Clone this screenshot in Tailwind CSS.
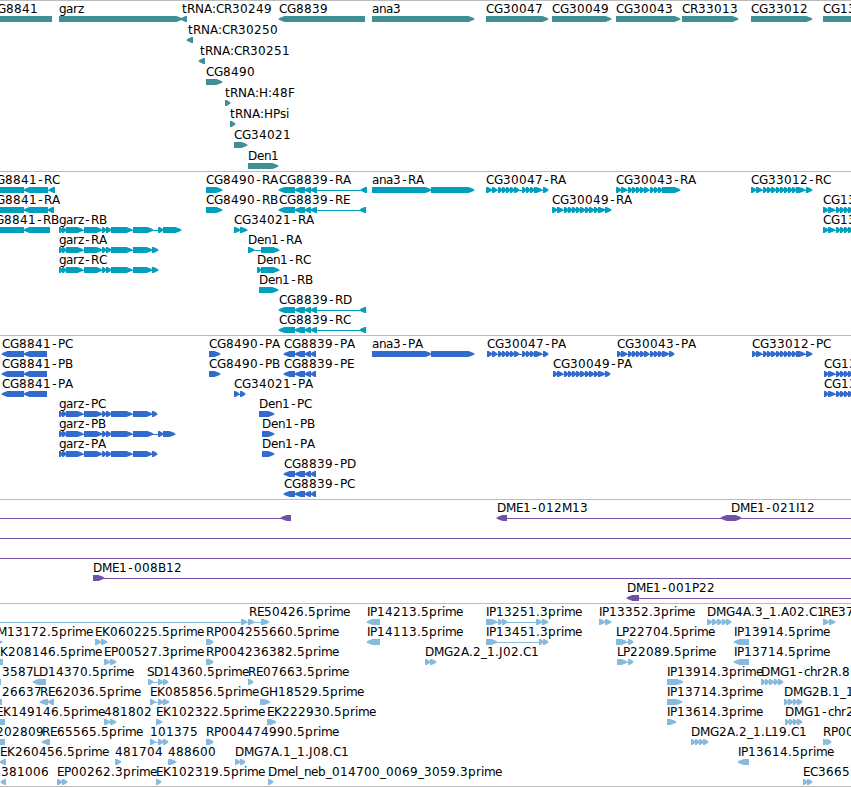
<!DOCTYPE html>
<html lang="en">
<head>
    <meta charset="UTF-8">
    <meta name="viewport" content="width=device-width, initial-scale=1.0">
    <title>Genome Browser</title>
    <script src="https://cdn.jsdelivr.net/npm/@tailwindcss/browser@4"></script>
</head>
<body class="bg-white overflow-hidden">

    <!-- Tracks, stacked top to bottom -->
    <main class="flex flex-col w-[851px] h-[787px] overflow-hidden border-b border-[#bbbbbb]">
        <section class="h-[171px] shrink-0 border-t border-[#bbbbbb] text-[#3f8f95]">
            <svg id="genes" class="block w-full h-full"></svg>
        </section>
        <section class="h-[164px] shrink-0 border-t border-[#bbbbbb] text-[#009fc0]">
            <svg id="transcripts" class="block w-full h-full"></svg>
        </section>
        <section class="h-[164px] shrink-0 border-t border-[#bbbbbb] text-[#316bce]">
            <svg id="proteins" class="block w-full h-full"></svg>
        </section>
        <section class="h-[104px] shrink-0 border-t border-[#bbbbbb] text-[#7350a8]">
            <svg id="clones" class="block w-full h-full"></svg>
        </section>
        <section class="h-[183px] shrink-0 border-t border-[#bbbbbb] text-[#87bbdd]">
            <svg id="ests" class="block w-full h-full"></svg>
        </section>
    </main>

    <script>
        // Label letter widths in pixels, digits are 8
        const widths = {
            C: 8, G: 9, R: 8, A: 8, B: 8, P: 7, N: 9, H: 9, F: 7, D: 9, E: 7, K: 8, S: 7, L: 6, M: 10, I: 3, J: 4,
            a: 7, b: 8, c: 6, e: 7, g: 7, h: 7, i: 3, l: 3, m: 11, n: 7, p: 8, r: 5, s: 6, t: 5, z: 6,
            "-": 7, ":": 4, ".": 4, "_": 6
        };

        const garz = "59-62 62-66 66-83 84-102 102-106 106-111 111-132";
        const cg8839 = "279-295 295-305 305-311 311-317";
        const cg8839p = "284-295 295-305 305-311 311-316";
        const cg13 = "823-828 828-835 836-840 840-844 844-848 848-852";

        // [row, label x, label, strand, blocks]
        const tracks = {
            genes: [
                [0, -11, "CG8841", "<", "-10-52"],
                [0, 59, "garz", ">", "59-182"],
                [0, 182, "tRNA:CR30249", "<", "181-187"],
                [0, 279, "CG8839", "<", "279-365"],
                [0, 372, "ana3", ">", "372-474"],
                [0, 486, "CG30047", ">", "486-548"],
                [0, 552, "CG30049", ">", "552-611"],
                [0, 616, "CG30043", ">", "616-680"],
                [0, 682, "CR33013", ">", "682-738"],
                [0, 751, "CG33012", ">", "751-812"],
                [0, 823, "CG13", ">", "823-880"],
                [1, 188, "tRNA:CR30250", "<", "187-193"],
                [2, 200, "tRNA:CR30251", "<", "199-205"],
                [3, 206, "CG8490", ">", "206-222"],
                [4, 225, "tRNA:H:48F", ">", "225-230"],
                [5, 230, "tRNA:HPsi", ">", "230-235"],
                [6, 234, "CG34021", ">", "234-247"],
                [7, 248, "Den1", ">", "248-278"]
            ],
            transcripts: [
                [0, -12, "CG8841-RC", "<", "-10-24 24-48 49-55"],
                [1, -12, "CG8841-RA", "<", "-10-24 24-48 48-54"],
                [2, -13, "CG8841-RB", "<", "-10-24 24-50"],
                [2, 59, "garz-RB", ">", garz + " 133-153 158-163 163-181"],
                [3, 59, "garz-RA", ">", garz + " 133-152 152-158"],
                [4, 59, "garz-RC", ">", garz + " 133-152 152-158"],
                [0, 206, "CG8490-RA", ">", "206-222"],
                [1, 206, "CG8490-RB", ">", "206-222"],
                [2, 234, "CG34021-RA", ">", "234-240 240-247"],
                [3, 248, "Den1-RA", ">", "248-254 261-279"],
                [4, 257, "Den1-RC", ">", "257-261 261-279"],
                [5, 259, "Den1-RB", ">", "259-278"],
                [0, 279, "CG8839-RA", "<", cg8839 + " 361-367"],
                [1, 279, "CG8839-RE", "<", cg8839 + " 360-366"],
                [6, 279, "CG8839-RD", "<", cg8839 + " 360-366"],
                [7, 279, "CG8839-RC", "<", cg8839 + " 360-366"],
                [0, 372, "ana3-RA", ">", "372-431 431-474"],
                [0, 486, "CG30047-RA", ">", "486-492 492-497 498-502 502-506 506-510 510-514 514-519 522-526 526-530 530-534 534-542 543-548"],
                [1, 552, "CG30049-RA", ">", "552-557 557-563 564-568 568-572 572-576 576-580 580-585 585-589 589-594 594-598 598-605 605-611"],
                [0, 616, "CG30043-RA", ">", "616-621 621-627 628-632 632-636 636-640 640-644 644-649 650-654 654-658 658-662 662-680"],
                [0, 751, "CG33012-RC", ">", "751-756 756-762 763-767 767-771 771-776 776-780 780-784 784-788 788-792 792-796 796-805 806-812"],
                [1, 823, "CG13", ">", cg13],
                [2, 823, "CG13", ">", cg13]
            ],
            proteins: [
                [0, 2, "CG8841-PC", "<", "2-24 24-47"],
                [1, 2, "CG8841-PB", "<", "2-24 24-47"],
                [2, 2, "CG8841-PA", "<", "2-24 24-47"],
                [3, 59, "garz-PC", ">", garz + " 133-152 152-157"],
                [4, 59, "garz-PB", ">", garz + " 133-153 158-163 163-175"],
                [5, 59, "garz-PA", ">", garz + " 133-152 152-157"],
                [0, 209, "CG8490-PA", ">", "209-220"],
                [1, 209, "CG8490-PB", ">", "209-220"],
                [2, 234, "CG34021-PA", ">", "234-239 240-245"],
                [3, 259, "Den1-PC", ">", "259-274"],
                [4, 262, "Den1-PB", ">", "262-274"],
                [5, 262, "Den1-PA", ">", "262-274"],
                [0, 284, "CG8839-PA", "<", cg8839p],
                [1, 284, "CG8839-PE", "<", cg8839p],
                [6, 284, "CG8839-PD", "<", cg8839p],
                [7, 284, "CG8839-PC", "<", cg8839p],
                [0, 372, "ana3-PA", ">", "372-431 431-474"],
                [0, 487, "CG30047-PA", ">", "487-492 492-497 498-502 502-506 506-510 510-514 514-519 522-526 526-530 530-534 534-542 543-548"],
                [1, 553, "CG30049-PA", ">", "553-557 557-563 564-568 568-572 572-576 576-580 580-585 585-589 589-594 594-598 598-605 605-610"],
                [0, 617, "CG30043-PA", ">", "617-621 621-627 628-632 632-636 636-640 640-644 644-649 650-654 654-658 658-662 662-669 669-674"],
                [0, 752, "CG33012-PC", ">", "752-756 756-762 763-767 767-771 771-776 776-780 780-784 784-788 788-792 792-796 796-805 806-812"],
                [1, 824, "CG13", ">", cg13.replace("823", "824")],
                [2, 824, "CG13", ">", cg13.replace("823", "824")]
            ],
            clones: [
                [0, 0, "", "<", "-20--10 281-291"],
                [0, 497, "DME1-012M13", "<", "497-507 721-731"],
                [0, 731, "DME1-021I12", ">", "731-741 870-880"],
                [1, 0, "", ">", "-20--10 870-880"],
                [2, 0, "", ">", "-20--10 870-880"],
                [3, 93, "DME1-008B12", ">", "93-104 870-880"],
                [4, 627, "DME1-001P22", "<", "627-639 870-880"]
            ],
            ests: [
                [0, 249, "RE50426.5prime", ">", "-20--10 241-247 248-254 261-269"],
                [0, 367, "IP14213.5prime", "<", "367-380"],
                [0, 486, "IP13251.3prime", ">", "486-497 498-502 502-507 536-542 542-548"],
                [0, 599, "IP13352.3prime", ">", "599-605 605-611"],
                [0, 707, "DMG4A.3_1.A02.C1", ">", "707-712 712-717 717-722 722-726 726-731"],
                [0, 823, "RE37", ">", "823-829 829-835"],
                [1, -3, "M13172.5prime", ">", "-8-2"],
                [1, 95, "EK060225.5prime", ">", "95-101 101-107"],
                [1, 206, "RP004255660.5prime", ">", "206-210 208-213"],
                [1, 367, "IP14113.5prime", "<", "367-380"],
                [1, 486, "IP13451.3prime", ">", "486-497 539-543 543-548"],
                [1, 616, "LP22704.5prime", ">", "616-627 628-633"],
                [1, 734, "IP13914.5prime", "<", "734-749"],
                [2, -7, "EK208146.5prime", "<", "-10-3"],
                [2, 104, "EP00527.3prime", ">", "104-110 110-116"],
                [2, 206, "RP004236382.5prime", ">", "206-210 208-213"],
                [2, 425, "DMG2A.2_1.J02.C1", ">", "425-430 430-436"],
                [2, 617, "LP22089.5prime", ">", "617-627 628-633"],
                [2, 734, "IP13714.5prime", "<", "734-749"],
                [3, 2, "3587", "<", "-10-1"],
                [3, 33, "LD14370.5prime", "<", "33-46"],
                [3, 147, "SD14360.5prime", ">", "148-153 158-163 163-168"],
                [3, 248, "RE07663.5prime", ">", "248-253"],
                [3, 667, "IP13914.3prime", ">", "667-683"],
                [3, 761, "DMG1-chr2R.8", ">", "761-765 765-769 769-774 774-778 778-783"],
                [4, 2, "26637", "<", "-10-2"],
                [4, 40, "RE62036.5prime", "<", "40-48 48-54"],
                [4, 150, "EK085856.5prime", ">", "150-155 158-163 163-169"],
                [4, 260, "GH18529.5prime", ">", "260-270"],
                [4, 667, "IP13714.3prime", ">", "667-682"],
                [4, 784, "DMG2B.1_1", ">", "784-788 788-793 793-797 797-802"],
                [5, -4, "EK149146.5prime", "<", "-10-5"],
                [5, 104, "481802", ">", "104-110 110-116"],
                [5, 156, "EK102322.5prime", ">", "156-162"],
                [5, 267, "EK222930.5prime", ">", "267-276"],
                [5, 667, "IP13614.3prime", ">", "667-676"],
                [5, 785, "DMG1-chr2", ">", "785-789 789-793 793-797 797-802"],
                [6, -4, "202809", "<", "-10-5"],
                [6, 42, "RE65565.5prime", "<", "42-50"],
                [6, 150, "101375", ">", "150-155 158-163 163-168"],
                [6, 206, "RP004474990.5prime", ">", "206-210 208-213"],
                [6, 691, "DMG2A.2_1.L19.C1", ">", "691-695 695-699 699-703 703-708"],
                [6, 823, "RP00", ">", "823-827 826-831"],
                [7, 0, "EK260456.5prime", "<", "0-6"],
                [7, 115, "481704", ">", "115-121"],
                [7, 168, "488600", ">", "168-176"],
                [7, 235, "DMG7A.1_1.J08.C1", ">", "235-240 240-245"],
                [7, 738, "IP13614.5prime", "<", "738-749"],
                [8, 1, "381006", "<", "1-6"],
                [8, 57, "EP00262.3prime", ">", "57-62 62-67"],
                [8, 156, "EK102319.5prime", ">", "156-161"],
                [8, 268, "Dmel_neb_014700_0069_3059.3prime", ">", "268-273"],
                [8, 803, "EC3665", ">", "803-807 807-812"]
            ]
        };

        // Block with a rounded point on the strand's side
        function arrow(a, b, y, strand) {
            const right = strand === ">";
            const head = Math.min(b - a, 7) - 1;
            const tip = right ? b + 0.5 : a - 0.5;
            const base = right ? a : b;
            const dir = right ? 1 : -1;
            const neck = tip - dir * head;
            const mid = tip - dir * head * 0.45;
            return `<path d="M${base} ${y}H${neck}L${mid} ${y + 1.2}L${tip} ${y + 2.7}V${y + 3.6}L${mid} ${y + 4.8}L${neck} ${y + 6}H${base}Z"/>`;
        }

        function label(x, y, text) {
            const xs = [];
            for (const ch of text) {
                // the hyphen sits in the middle of its cell
                xs.push(ch === "-" ? x + 1.3 : x);
                x += widths[ch] || 8;
            }
            return `<text x="${xs.join(" ")}" y="${y}" class="fill-black font-['DejaVu_Sans',sans-serif] text-[12px]">${text}</text>`;
        }

        for (const id in tracks) {
            const pitch = id === "genes" ? 21 : 20;
            let out = "";
            for (const [row, x, text, strand, blocks] of tracks[id]) {
                const top = row * pitch;
                const spans = blocks.split(" ").map(s => s.match(/^(-?\d+)-(-?\d+)$/).slice(1).map(Number));
                const start = spans[0][0];
                const end = spans[spans.length - 1][1];
                out += `<g class="fill-current">`;
                if (spans.length > 1) out += `<rect x="${start}" y="${top + 18}" width="${end - start}" height="1"/>`;
                out += spans.map(([a, b]) => arrow(a, b, top + 15, strand)).join("") + `</g>`;
                if (text) out += label(x, top + 12, text);
            }
            document.getElementById(id).innerHTML = out;
        }
    </script>
</body>
</html>
